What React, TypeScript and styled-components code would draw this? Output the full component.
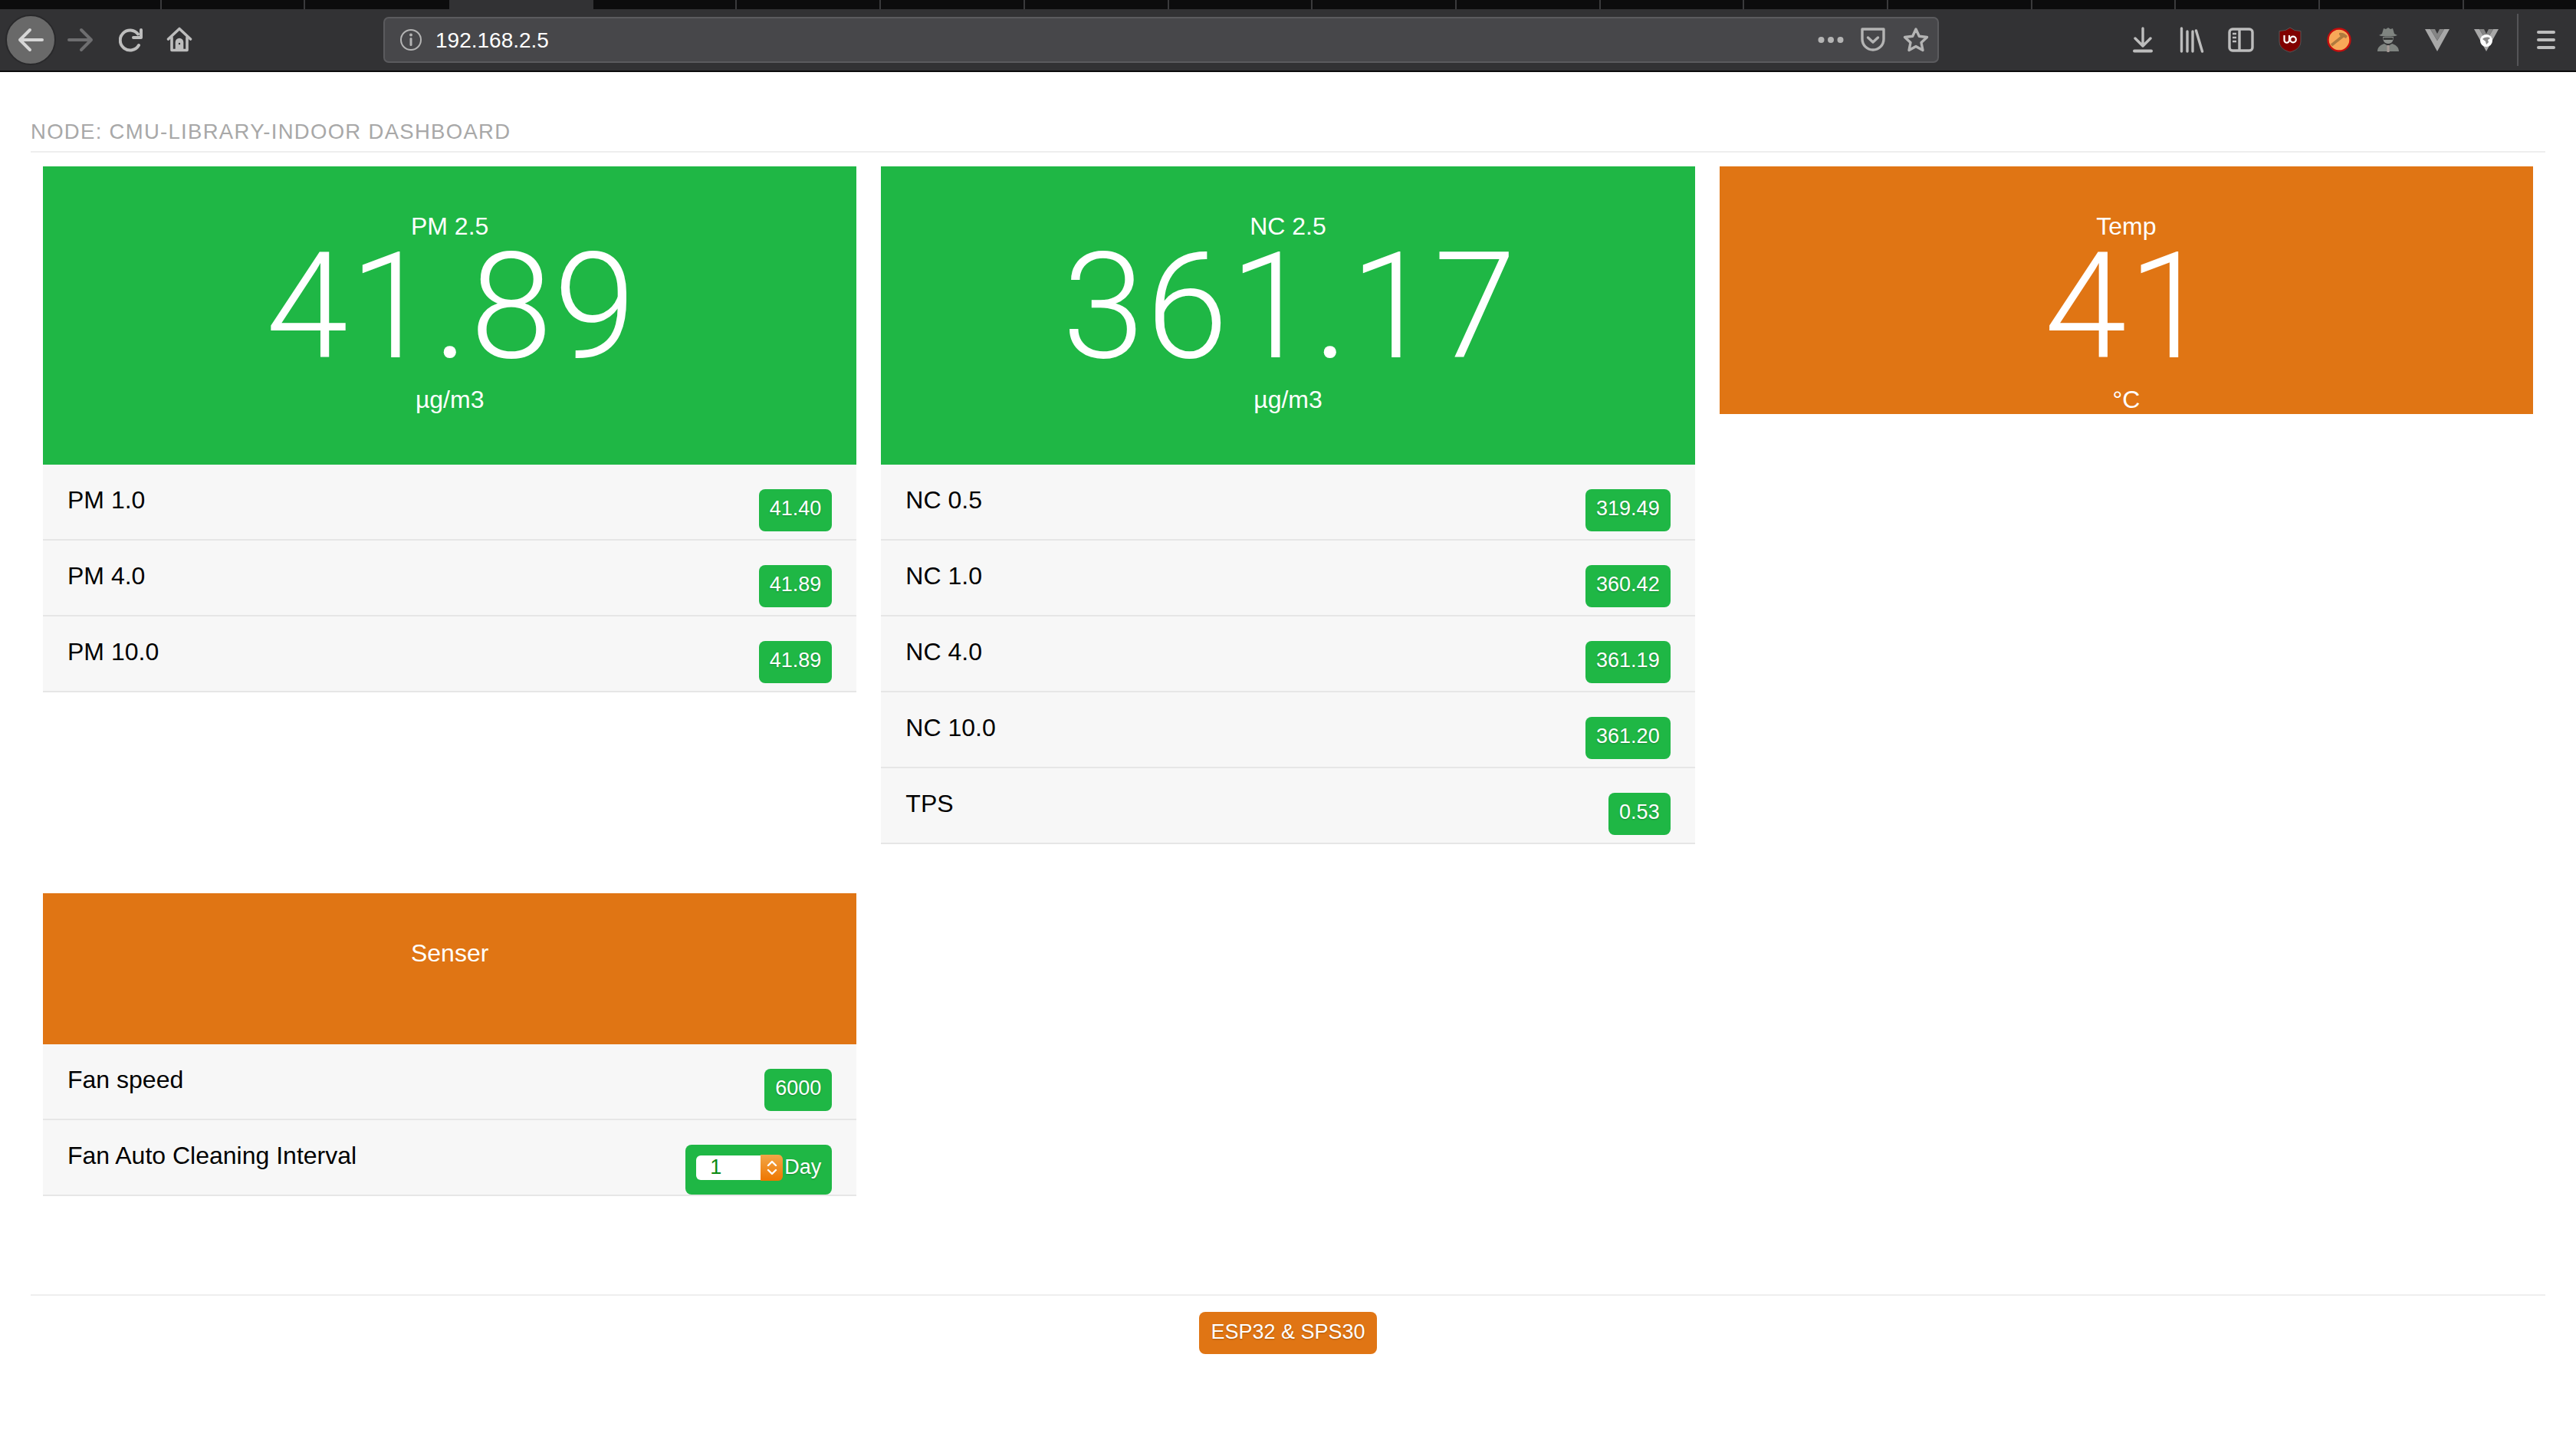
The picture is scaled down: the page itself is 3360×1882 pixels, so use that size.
import React from 'react';
import styled, { createGlobalStyle } from 'styled-components';

const GREEN = '#1fb745';
const ORANGE = '#e07514';

const GlobalStyle = createGlobalStyle`
  html, body {
    margin: 0;
    padding: 0;
    background: #fff;
    font-family: "Liberation Sans", Arial, sans-serif;
  }
  * { box-sizing: border-box; }
`;

/* browser chrome */
const Chrome = styled.header`
  height: 94px;
  background: #323234;
  border-bottom: 2px solid #0c0c0d;
`;

const TabStrip = styled.div`
  display: flex;
  height: 12px;
  padding-left: 23px;
  background: #0c0c0d;
  overflow: hidden;
`;

const Tab = styled.div<{ $active?: boolean; $plain?: boolean }>`
  flex: 0 0 187.7px;
  background: ${(p) => (p.$active ? '#323234' : 'transparent')};
  border-right: 2px solid ${(p) => (p.$plain ? 'transparent' : '#3a3a3c')};
`;

const Toolbar = styled.div`
  display: flex;
  align-items: center;
  height: 80px;
  padding-left: 7px;
`;

const BackButton = styled.div`
  display: flex;
  align-items: center;
  justify-content: center;
  width: 66px;
  height: 66px;
  border-radius: 50%;
  background: #696969;
  border: 2px solid #29292b;
`;

const NavIcon = styled.div<{ $width?: number }>`
  display: flex;
  align-items: center;
  justify-content: center;
  flex: 0 0 ${(p) => p.$width ?? 64}px;
  height: 40px;
`;

const AddressBar = styled.div`
  display: flex;
  align-items: center;
  flex: 0 0 2029px;
  height: 60px;
  margin-left: 237px;
  margin-right: 234px;
  padding: 0 0 0 19px;
  background: #47474a;
  border: 2px solid #5b5b5e;
  border-radius: 7px;
`;

const Url = styled.span`
  flex: 1;
  margin-left: 17px;
  margin-top: 2px;
  color: #fff;
  font-size: 28px;
`;

const Separator = styled.div`
  flex: 0 0 2px;
  height: 68px;
  margin: 0 24px 0 8px;
  background: #555558;
`;

/* page */
const Page = styled.main`
  padding: 0 40px;
`;

const Heading = styled.h1`
  margin: 0;
  padding-top: 60px;
  height: 105px;
  border-bottom: 2px solid #eeeeee;
  color: #a8a8a8;
  font-size: 27.5px;
  font-weight: 400;
  line-height: 36px;
  letter-spacing: 1.3px;
  text-transform: uppercase;
`;

const Grid = styled.section`
  display: grid;
  grid-template-columns: repeat(3, 1fr);
  row-gap: 64px;
  align-items: start;
  padding-top: 18px;
`;

const Column = styled.div`
  padding: 0 16px;
`;

const Tile = styled.div<{ $color: string; $bottom: number }>`
  padding: 61px 0 ${(p) => p.$bottom}px;
  background: ${(p) => p.$color};
  color: #fff;
  text-align: center;
`;

const TileTitle = styled.div`
  height: 34px;
  font-size: 32px;
  line-height: 34px;
`;

const TileValue = styled.div`
  height: 165px;
  padding-left: 5px;
  font-family: Roboto, "Liberation Sans", sans-serif;
  font-size: 193px;
  font-weight: 300;
  letter-spacing: 2px;
  line-height: 176px;
`;

const TileUnit = styled.div`
  height: 39px;
  margin-top: 24px;
  font-size: 32px;
  line-height: 40px;
`;

const List = styled.ul`
  margin: 0;
  padding: 0;
  list-style: none;
`;

const Row = styled.li`
  display: flex;
  align-items: flex-start;
  justify-content: space-between;
  height: 99px;
  padding: 24px 32px 0;
  background: #f7f7f7;
  border-bottom: 2px solid #e6e6e6;
  color: #000;
  font-size: 32px;
  line-height: 44px;
`;

const Badge = styled.span<{ $tall?: boolean }>`
  display: flex;
  align-items: center;
  height: ${(p) => (p.$tall ? 65 : 55)}px;
  margin-top: 8px;
  padding: 0 14px 4px;
  background: ${GREEN};
  border-radius: 8px;
  color: #fff;
  font-size: 27px;
  line-height: 1;
  text-shadow: 0 1px 2px rgba(0, 0, 0, 0.25);
`;

const IntervalInput = styled.input`
  width: 84px;
  height: 32px;
  padding: 0 0 0 18px;
  border: none;
  border-radius: 6px 0 0 6px;
  outline: none;
  background: #fff;
  color: #0a8a12;
  font-family: inherit;
  font-size: 27px;
`;

const Stepper = styled.span`
  display: flex;
  align-items: center;
  justify-content: center;
  width: 29px;
  height: 34px;
  margin-right: 2px;
  background: linear-gradient(#f2a648, #ee7600);
  border-radius: 0 6px 6px 0;
`;

const Interval = styled.span`
  display: flex;
  align-items: center;
  margin-top: -2px;
`;

const Footer = styled.footer`
  display: flex;
  justify-content: center;
  margin-top: 128px;
  padding-top: 21px;
  border-top: 2px solid #eeeeee;
`;

const FooterBadge = styled.span`
  display: flex;
  align-items: center;
  height: 55px;
  padding: 0 15px 3px;
  background: ${ORANGE};
  border-radius: 8px;
  color: #fff;
  font-size: 27px;
  text-shadow: 0 1px 2px rgba(0, 0, 0, 0.25);
`;

/* icons, drawn from the Firefox toolbar */
const GREY = '#bdbdbd';

const Arrow = ({ back, color }: { back?: boolean; color: string }) => (
  <svg width="34" height="32" viewBox="0 0 34 32" fill="none" stroke={color} strokeWidth="4" strokeLinecap="round" strokeLinejoin="round">
    {back ? <path d="M32 16H3M16 3 3 16l13 13" /> : <path d="M2 16h29M18 3l13 13-13 13" />}
  </svg>
);

const Reload = () => (
  <svg width="32" height="32" viewBox="0 0 32 32" fill="none" stroke={GREY} strokeWidth="4" strokeLinecap="round" strokeLinejoin="round">
    <path d="M26 23a13 13 0 1 1-1-14.5" />
    <path d="M29 3v10H19" />
  </svg>
);

const Home = () => (
  <svg width="34" height="34" viewBox="0 0 34 34" fill="none" stroke={GREY} strokeWidth="3.6" strokeLinecap="round" strokeLinejoin="round">
    <path d="M2.5 16 17 2.5 31.5 16" />
    <path d="M7 14v16.5h20V14" />
    <path d="M13.5 30V20a3.5 3.5 0 0 1 7 0v10" fill={GREY} />
    <circle cx="17" cy="22" r="1.2" fill="#323234" stroke="none" />
  </svg>
);

const Info = () => (
  <svg width="30" height="30" viewBox="0 0 30 30" fill="none" stroke="#b4b4b4" strokeWidth="2">
    <circle cx="15" cy="15" r="13" />
    <path d="M15 13.5v8" strokeWidth="3" strokeLinecap="round" />
    <circle cx="15" cy="8.5" r="2" fill="#b4b4b4" stroke="none" />
  </svg>
);

const Dots = () => (
  <svg width="34" height="10" viewBox="0 0 34 10" fill="#b4b4b4">
    <circle cx="4.5" cy="5" r="4" />
    <circle cx="17" cy="5" r="4" />
    <circle cx="29.5" cy="5" r="4" />
  </svg>
);

const Pocket = () => (
  <svg width="34" height="32" viewBox="0 0 34 32" fill="none" stroke="#b4b4b4" strokeWidth="3.4" strokeLinecap="round" strokeLinejoin="round">
    <path d="M3 2h28v13a14 14 0 0 1-28 0z" />
    <path d="M10.5 13l6.5 6 6.5-6" />
  </svg>
);

const Star = () => (
  <svg width="34" height="34" viewBox="0 0 34 34" fill="none" stroke="#b4b4b4" strokeWidth="3.4" strokeLinejoin="round">
    <path d="M17 3l4.3 9.3 10.2 1.2-7.5 7 2 10L17 25.5 8 30.5l2-10-7.5-7 10.2-1.2z" />
  </svg>
);

const Download = () => (
  <svg width="26" height="34" viewBox="0 0 26 34" fill="none" stroke={GREY} strokeWidth="3.4" strokeLinecap="round" strokeLinejoin="round">
    <path d="M13 2v23M3 15l10 10 10-10" />
    <path d="M2 31.5h22" strokeWidth="4" />
  </svg>
);

const Library = () => (
  <svg width="32" height="34" viewBox="0 0 32 34" fill="none" stroke={GREY} strokeWidth="3.4" strokeLinecap="round">
    <path d="M2.5 2v30M10 6v26M17 6v26M21.5 5 29.5 32" />
  </svg>
);

const Sidebar = () => (
  <svg width="34" height="34" viewBox="0 0 34 34" fill="none" stroke={GREY} strokeWidth="3.4" strokeLinejoin="round">
    <rect x="2" y="3" width="30" height="28" rx="4" />
    <path d="M15 3v28" />
    <path d="M6 9h5M6 14h5M6 19h5" strokeWidth="2.4" />
  </svg>
);

const UBlock = () => (
  <svg width="30" height="34" viewBox="0 0 30 34" fill="none">
    <path d="M15 1l6 3.500 8 1V19c0 8-7 12-14 14C8 31 1 27 1 19V5.500l8-1z" fill="#800000" stroke="#555" strokeWidth="1" />
    <path d="M7.500 11v6.500a3.200 3.200 0 0 0 6.500 0V11" stroke="#fff" strokeWidth="2.200" />
    <circle cx="19" cy="16.500" r="3.800" stroke="#fff" strokeWidth="2.200" />
  </svg>
);

const Hammer = () => (
  <svg width="32" height="32" viewBox="0 0 32 32" fill="none">
    <circle cx="16" cy="16" r="14.500" fill="#f8a858" stroke="#c40d0d" strokeWidth="2.400" />
    <path d="M6 23 21 11" stroke="#b07a3e" strokeWidth="3.600" />
    <path d="M16 7c4-1 7 0 11 4l-2 3-4-2-2 1-3-4z" fill="#b07a3e" />
  </svg>
);

const Spy = () => (
  <svg width="30" height="34" viewBox="0 0 30 34" fill="#7f8480">
    <path d="M15 1l3 2 3-1 2 7 4 2c-4 2-20 2-24 0l4-2 2-7 3 1z" />
    <path d="M8 13h14c0 5-2 9-7 9s-7-4-7-9z" fill="#8d918e" />
    <path d="M8.500 14h13l-.5 3h-12z" fill="#3a3c3b" />
    <path d="M1 32c0-6 5-9 9-10l5 3 5-3c4 1 9 4 9 10z" />
    <path d="M13.500 24h3v9h-3z" fill="#a69a96" />
  </svg>
);

const Vee = ({ badge }: { badge?: boolean }) => (
  <svg width="32" height="30" viewBox="0 0 32 30" fill="none">
    <path d="M0 1h7l9 15 9-15h7L16 30z" fill="#a8a8a8" />
    <path d="M7 1h6l3 6 3-6h6l-9 15z" fill="#858585" />
    {badge && <circle cx="16" cy="16" r="8" fill="#fff" />}
    {badge && <path d="M11 14c3-3 8-3 10-1l-3 2 1 3-3 3-1-4z" fill="#8a8a8a" />}
  </svg>
);

const ChevronPair = () => (
  <svg width="16" height="24" viewBox="0 0 16 24" fill="none" stroke="#fff" strokeWidth="2.400" strokeLinecap="round" strokeLinejoin="round">
    <path d="M3 9l5-5 5 5M3 15l5 5 5-5" />
  </svg>
);

const Menu = () => (
  <svg width="24" height="26" viewBox="0 0 24 26" fill={GREY}>
    <rect y="1" width="24" height="4" rx="2" />
    <rect y="11" width="24" height="4" rx="2" />
    <rect y="21" width="24" height="4" rx="2" />
  </svg>
);

const pmRows = [
  ['PM 1.0', '41.40'],
  ['PM 4.0', '41.89'],
  ['PM 10.0', '41.89'],
];

const ncRows = [
  ['NC 0.5', '319.49'],
  ['NC 1.0', '360.42'],
  ['NC 4.0', '361.19'],
  ['NC 10.0', '361.20'],
  ['TPS', '0.53'],
];

const renderRows = (rows: string[][]) =>
  rows.map(([label, value]) => (
    <Row key={label}>
      {label}
      <Badge>{value}</Badge>
    </Row>
  ));

const App: React.FC = () => (
  <>
    <GlobalStyle />
    <Chrome>
      <TabStrip>
        {Array.from({ length: 18 }, (_, i) => (
          <Tab key={i} $active={i === 3} $plain={i === 2 || i === 3} />
        ))}
      </TabStrip>
      <Toolbar>
        <BackButton><Arrow back color="#d6d6d6" /></BackButton>
        <NavIcon $width={64}><Arrow color="#6e6e70" /></NavIcon>
        <NavIcon $width={68}><Reload /></NavIcon>
        <NavIcon $width={58}><Home /></NavIcon>
        <AddressBar>
          <Info />
          <Url>192.168.2.5</Url>
          <NavIcon $width={54}><Dots /></NavIcon>
          <NavIcon $width={56}><Pocket /></NavIcon>
          <NavIcon $width={56}><Star /></NavIcon>
        </AddressBar>
        <NavIcon><Download /></NavIcon>
        <NavIcon><Library /></NavIcon>
        <NavIcon><Sidebar /></NavIcon>
        <NavIcon><UBlock /></NavIcon>
        <NavIcon><Hammer /></NavIcon>
        <NavIcon><Spy /></NavIcon>
        <NavIcon><Vee /></NavIcon>
        <NavIcon><Vee badge /></NavIcon>
        <Separator />
        <Menu />
      </Toolbar>
    </Chrome>
    <Page>
      <Heading>Node: CMU-Library-Indoor Dashboard</Heading>
      <Grid>
        <Column>
          <Tile $color={GREEN} $bottom={66}>
            <TileTitle>PM 2.5</TileTitle>
            <TileValue>41.89</TileValue>
            <TileUnit>µg/m3</TileUnit>
          </Tile>
          <List>{renderRows(pmRows)}</List>
        </Column>
        <Column>
          <Tile $color={GREEN} $bottom={66}>
            <TileTitle>NC 2.5</TileTitle>
            <TileValue>361.17</TileValue>
            <TileUnit>µg/m3</TileUnit>
          </Tile>
          <List>{renderRows(ncRows)}</List>
        </Column>
        <Column>
          <Tile $color={ORANGE} $bottom={0}>
            <TileTitle>Temp</TileTitle>
            <TileValue>41</TileValue>
            <TileUnit>°C</TileUnit>
          </Tile>
        </Column>
        <Column>
          <Tile $color={ORANGE} $bottom={102}>
            <TileTitle>Senser</TileTitle>
          </Tile>
          <List>
            <Row>
              Fan speed
              <Badge>6000</Badge>
            </Row>
            <Row>
              Fan Auto Cleaning Interval
              <Badge $tall>
                <Interval>
                  <IntervalInput type="text" defaultValue="1" readOnly />
                  <Stepper><ChevronPair /></Stepper>
                  Day
                </Interval>
              </Badge>
            </Row>
          </List>
        </Column>
      </Grid>
      <Footer>
        <FooterBadge>ESP32 &amp; SPS30</FooterBadge>
      </Footer>
    </Page>
  </>
);

export default App;
